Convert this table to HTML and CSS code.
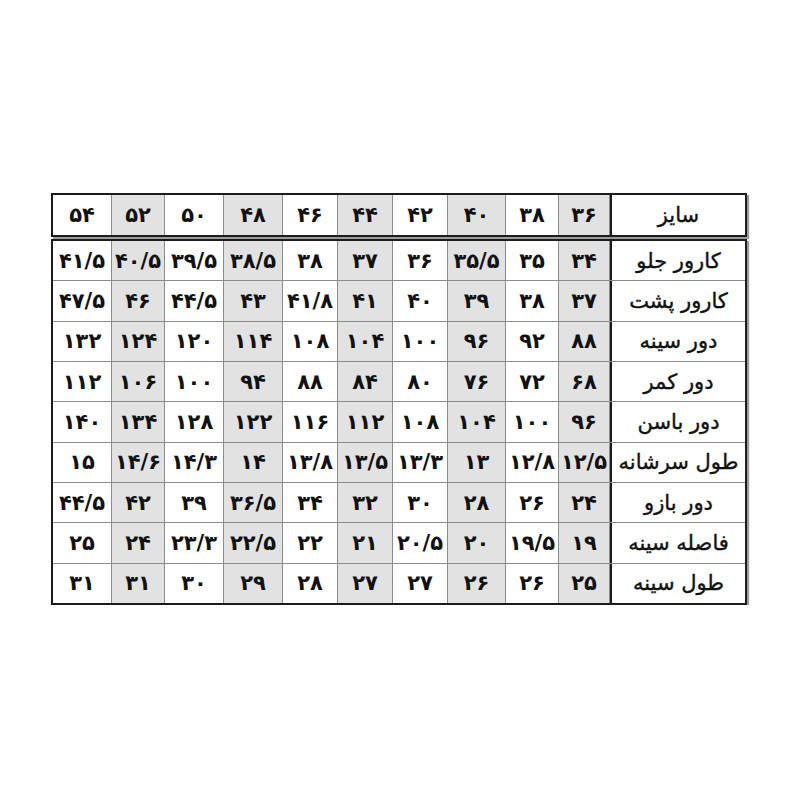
FILE: index.html
```html
<!DOCTYPE html>
<html lang="fa">
<head>
<meta charset="utf-8">
<title>جدول سایز</title>
<link rel="stylesheet" href="styles.css">
</head>
<body>
<div class="chart" dir="rtl">
  <div class="box head">
    <div class="lbl">سایز</div>
    <div>۳۶</div><div>۳۸</div><div>۴۰</div><div>۴۲</div><div>۴۴</div><div>۴۶</div><div>۴۸</div><div>۵۰</div><div>۵۲</div><div>۵۴</div>
  </div>
  <div class="box body">
    <div class="lbl">کارور جلو</div>
    <div>۳۴</div><div>۳۵</div><div>۳۵/۵</div><div>۳۶</div><div>۳۷</div><div>۳۸</div><div>۳۸/۵</div><div>۳۹/۵</div><div>۴۰/۵</div><div>۴۱/۵</div>
    <div class="lbl">کارور پشت</div>
    <div>۳۷</div><div>۳۸</div><div>۳۹</div><div>۴۰</div><div>۴۱</div><div>۴۱/۸</div><div>۴۳</div><div>۴۴/۵</div><div>۴۶</div><div>۴۷/۵</div>
    <div class="lbl">دور سینه</div>
    <div>۸۸</div><div>۹۲</div><div>۹۶</div><div>۱۰۰</div><div>۱۰۴</div><div>۱۰۸</div><div>۱۱۴</div><div>۱۲۰</div><div>۱۲۴</div><div>۱۳۲</div>
    <div class="lbl">دور کمر</div>
    <div>۶۸</div><div>۷۲</div><div>۷۶</div><div>۸۰</div><div>۸۴</div><div>۸۸</div><div>۹۴</div><div>۱۰۰</div><div>۱۰۶</div><div>۱۱۲</div>
    <div class="lbl">دور باسن</div>
    <div>۹۶</div><div>۱۰۰</div><div>۱۰۴</div><div>۱۰۸</div><div>۱۱۲</div><div>۱۱۶</div><div>۱۲۲</div><div>۱۲۸</div><div>۱۳۴</div><div>۱۴۰</div>
    <div class="lbl">طول سرشانه</div>
    <div>۱۲/۵</div><div>۱۲/۸</div><div>۱۳</div><div>۱۳/۳</div><div>۱۳/۵</div><div>۱۳/۸</div><div>۱۴</div><div>۱۴/۳</div><div>۱۴/۶</div><div>۱۵</div>
    <div class="lbl">دور بازو</div>
    <div>۲۴</div><div>۲۶</div><div>۲۸</div><div>۳۰</div><div>۳۲</div><div>۳۴</div><div>۳۶/۵</div><div>۳۹</div><div>۴۲</div><div>۴۴/۵</div>
    <div class="lbl">فاصله سینه</div>
    <div>۱۹</div><div>۱۹/۵</div><div>۲۰</div><div>۲۰/۵</div><div>۲۱</div><div>۲۲</div><div>۲۲/۵</div><div>۲۳/۳</div><div>۲۴</div><div>۲۵</div>
    <div class="lbl">طول سینه</div>
    <div>۲۵</div><div>۲۶</div><div>۲۶</div><div>۲۷</div><div>۲۷</div><div>۲۸</div><div>۲۹</div><div>۳۰</div><div>۳۱</div><div>۳۱</div>
  </div>
</div>
</body>
</html>
```
FILE: styles.css
```css
html, body {
  margin: 0;
  padding: 0;
  background: #ffffff;
}

.chart {
  padding: 193px 0 0 51px;
  width: 696px;
  font-family: "DejaVu Sans", sans-serif;
  color: #111;
}

.box {
  display: grid;
  grid-template-columns: 135px 50px 52px 57px 54px 54px 54px 58px 58px 52px 58px;
  gap: 1px;
  background: #8c8c8c;
  border: 2px solid #1c1c1c;
  box-shadow: 2px 2px 1px #9c9c9c;
}

.head {
  grid-template-rows: 40px;
  margin-bottom: 2px;
}

.body {
  grid-template-rows: repeat(9, 1fr);
  height: 362px;
}

.box > div {
  display: flex;
  align-items: center;
  justify-content: center;
  background: #ffffff;
  font-size: 21px;
  font-weight: bold;
  white-space: nowrap;
}

.box > div:nth-child(11n+2),
.box > div:nth-child(11n+4),
.box > div:nth-child(11n+6),
.box > div:nth-child(11n+8),
.box > div:nth-child(11n+10) {
  background: #e2e2e2;
}

.box > .lbl {
  font-weight: normal;
  font-size: 21px;
  -webkit-text-stroke: 0.4px #111;
  border-left: 2px solid #1c1c1c;
}
```
